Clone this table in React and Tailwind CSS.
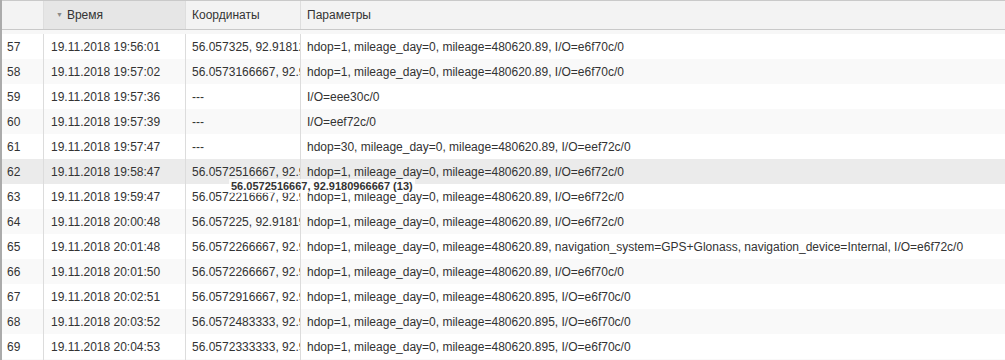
import React from 'react';

const rows = [
    { n: 57, t: '19.11.2018 19:56:01', c: '56.057325, 92.9181233333', p: 'hdop=1, mileage_day=0, mileage=480620.89, I/O=e6f70c/0' },
    { n: 58, t: '19.11.2018 19:57:02', c: '56.0573166667, 92.9181066667', p: 'hdop=1, mileage_day=0, mileage=480620.89, I/O=e6f70c/0' },
    { n: 59, t: '19.11.2018 19:57:36', c: '---', p: 'I/O=eee30c/0' },
    { n: 60, t: '19.11.2018 19:57:39', c: '---', p: 'I/O=eef72c/0' },
    { n: 61, t: '19.11.2018 19:57:47', c: '---', p: 'hdop=30, mileage_day=0, mileage=480620.89, I/O=eef72c/0' },
    { n: 62, t: '19.11.2018 19:58:47', c: '56.0572516667, 92.9180966667', p: 'hdop=1, mileage_day=0, mileage=480620.89, I/O=e6f72c/0', active: true },
    { n: 63, t: '19.11.2018 19:59:47', c: '56.0572216667, 92.9180816667', p: 'hdop=1, mileage_day=0, mileage=480620.89, I/O=e6f72c/0' },
    { n: 64, t: '19.11.2018 20:00:48', c: '56.057225, 92.9181916667', p: 'hdop=1, mileage_day=0, mileage=480620.89, I/O=e6f72c/0' },
    { n: 65, t: '19.11.2018 20:01:48', c: '56.0572266667, 92.9181183333', p: 'hdop=1, mileage_day=0, mileage=480620.89, navigation_system=GPS+Glonass, navigation_device=Internal, I/O=e6f72c/0' },
    { n: 66, t: '19.11.2018 20:01:50', c: '56.0572266667, 92.9181183333', p: 'hdop=1, mileage_day=0, mileage=480620.89, I/O=e6f70c/0' },
    { n: 67, t: '19.11.2018 20:02:51', c: '56.0572916667, 92.9180733333', p: 'hdop=1, mileage_day=0, mileage=480620.895, I/O=e6f70c/0' },
    { n: 68, t: '19.11.2018 20:03:52', c: '56.0572483333, 92.9180883333', p: 'hdop=1, mileage_day=0, mileage=480620.895, I/O=e6f70c/0' },
    { n: 69, t: '19.11.2018 20:04:53', c: '56.0572333333, 92.9180966667', p: 'hdop=1, mileage_day=0, mileage=480620.895, I/O=e6f70c/0' },
    { n: 70, t: '19.11.2018 20:05:54', c: '56.0572333333, 92.9180966667', p: 'hdop=1, mileage_day=0, mileage=480620.895, I/O=e6f70c/0' },
];

export default function App() {
    return (
        <div className="relative w-[1005px] h-[360px] overflow-hidden bg-white border-l-2 border-[#ababab] text-[12px] text-[#333] font-['Liberation_Sans',Arial,sans-serif]">
            {/* header */}
            <div className="flex h-[30px] bg-[#f3f3f3] border-t border-b border-[#c9c9c9]">
                <div className="w-[42px] shrink-0 border-r border-[#dedede]"></div>
                <div className="w-[142px] shrink-0 flex items-center pl-[12px] bg-[#e6e6e6] border-r border-[#dedede]">
                    <span className="text-[#8a8a8a] text-[7px] mr-[4px]">▼</span>
                    <span>Время</span>
                </div>
                <div className="w-[115px] shrink-0 flex items-center pl-[6px] border-r border-[#dedede]">Координаты</div>
                <div className="flex-1 flex items-center pl-[6px]">Параметры</div>
            </div>
            <div className="h-[4px] bg-[#f7f7f7]"></div>

            {/* rows */}
            {rows.map((r, i) => (
                <div
                    key={r.n}
                    className={
                        'flex h-[25px] ' +
                        (r.active ? 'bg-[#ebebeb]' : i % 2 === 1 ? 'bg-[#f9f9f9]' : 'bg-white')
                    }
                >
                    <div className="w-[42px] shrink-0 flex items-center pl-[5px] border-r border-[#dcdcdc]">{r.n}</div>
                    <div className="w-[142px] shrink-0 flex items-center pl-[7px] border-r border-[#dcdcdc]">{r.t}</div>
                    <div className="w-[115px] shrink-0 flex items-center pl-[6px] border-r border-[#dcdcdc] overflow-hidden whitespace-nowrap">{r.c}</div>
                    <div className="flex-1 flex items-center pl-[6px] overflow-hidden whitespace-nowrap">{r.p}</div>
                </div>
            ))}

            {/* tooltip */}
            <div className="absolute left-[227px] top-[179px] px-[2px] leading-[14px] text-[11px] font-bold bg-white/80 text-[#333] whitespace-nowrap">
                56.0572516667, 92.9180966667 (13)
            </div>
        </div>
    );
}
